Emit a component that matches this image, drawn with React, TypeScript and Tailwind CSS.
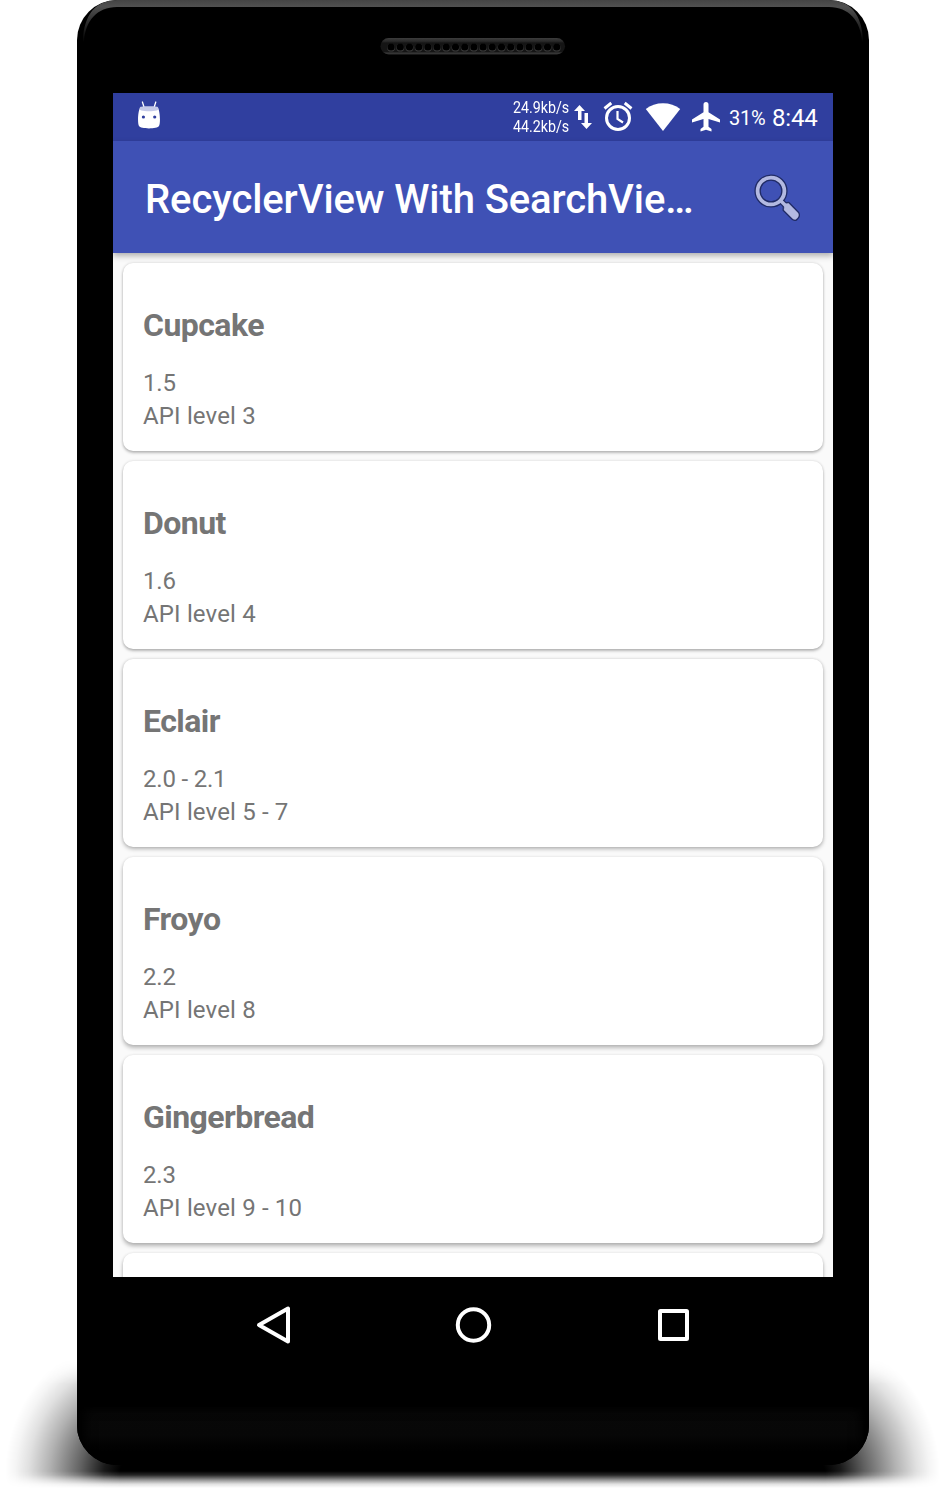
import React from "react";

type Release = { name: string; version: string; api: string; shadow: string };

const releases: Release[] = [
  { name: "Cupcake", version: "1.5", api: "API level 3", shadow: "shadow-[0_2px_3px_rgba(0,0,0,0.24),0_0_3px_rgba(0,0,0,0.16)]" },
  { name: "Donut", version: "1.6", api: "API level 4", shadow: "shadow-[0_2px_3px_rgba(0,0,0,0.25),0_0_3px_rgba(0,0,0,0.14)]" },
  { name: "Eclair", version: "2.0 - 2.1", api: "API level 5 - 7", shadow: "shadow-[0_2px_4px_rgba(0,0,0,0.27),0_0_3px_rgba(0,0,0,0.12)]" },
  { name: "Froyo", version: "2.2", api: "API level 8", shadow: "shadow-[0_3px_4px_rgba(0,0,0,0.26),0_0_3px_rgba(0,0,0,0.1)]" },
  { name: "Gingerbread", version: "2.3", api: "API level 9 - 10", shadow: "shadow-[0_3px_4px_rgba(0,0,0,0.28),0_0_3px_rgba(0,0,0,0.09)]" },
];

function GroundShadow() {
  return (
    <svg className="absolute bottom-0 left-0" width="945" height="150" viewBox="0 1340 945 150" aria-hidden="true">
      <defs>
        <radialGradient id="corner">
          <stop offset="0" stopColor="#000" />
          <stop offset="0.12" stopColor="#000" />
          <stop offset="0.24" stopColor="#000" stopOpacity="0.9" />
          <stop offset="0.42" stopColor="#000" stopOpacity="0.62" />
          <stop offset="0.66" stopColor="#000" stopOpacity="0.3" />
          <stop offset="0.82" stopColor="#000" stopOpacity="0.12" />
          <stop offset="0.92" stopColor="#000" stopOpacity="0.04" />
          <stop offset="1" stopColor="#000" stopOpacity="0" />
        </radialGradient>
        <linearGradient id="fade" x1="0" y1="1358" x2="0" y2="1488" gradientUnits="userSpaceOnUse">
          <stop offset="0" stopColor="#fff" stopOpacity="0" />
          <stop offset="0.2" stopColor="#fff" />
          <stop offset="0.87" stopColor="#fff" />
          <stop offset="0.9" stopColor="#fff" stopOpacity="0.85" />
          <stop offset="0.94" stopColor="#fff" stopOpacity="0.4" />
          <stop offset="0.97" stopColor="#fff" stopOpacity="0.12" />
          <stop offset="1" stopColor="#fff" stopOpacity="0" />
        </linearGradient>
        <mask id="fadeMask" maskUnits="userSpaceOnUse" x="0" y="1340" width="945" height="150">
          <rect y="1340" width="945" height="150" fill="url(#fade)" />
        </mask>
      </defs>
      <g mask="url(#fadeMask)">
        <ellipse cx="135" cy="1475" rx="130" ry="140" fill="url(#corner)" />
        <ellipse cx="810" cy="1475" rx="130" ry="140" fill="url(#corner)" />
        <rect x="135" y="1450" width="675" height="40" />
      </g>
    </svg>
  );
}

function Speaker() {
  return (
    <svg width="186" height="18" viewBox="0 0 186 18" aria-hidden="true">
      <defs>
        <linearGradient id="grille" x1="0" y1="0" x2="0" y2="1">
          <stop offset="0" stopColor="#3c3c3c" />
          <stop offset="0.2" stopColor="#292929" />
          <stop offset="0.3" stopColor="#151515" />
          <stop offset="0.85" stopColor="#151515" />
          <stop offset="0.9" stopColor="#383838" />
          <stop offset="1" stopColor="#303030" />
        </linearGradient>
      </defs>
      <rect x="0.5" y="1" width="184.500" height="16.500" rx="8.200" fill="url(#grille)" />
      {Array.from({ length: 19 }, (_, i) => (
        <g key={i}>
          <circle cx={11.1 + i * 9.2} cy="10.700" r="3.900" fill="#3c3c3c" />
          <circle cx={11.1 + i * 9.2} cy="10" r="3.600" fill="#000" />
        </g>
      ))}
    </svg>
  );
}

function StatusBar() {
  return (
    <div className="flex h-12 shrink-0 items-center bg-[#303f9f] text-white">
      <svg className="mb-1 ml-6 shrink-0" width="24" height="28" viewBox="0 0 24 28" aria-hidden="true">
        <path d="M5.400 1 7 6M18.800 1 17.200 6" stroke="#fff" strokeWidth="1.300" strokeLinecap="round" />
        <path d="M3 7C1 10 .3 22 2 25c1.400 3.200 18.600 3.200 20 0 1.700-3 1-15-1-18Z" fill="#fff" />
        <path d="M3.200 6C5 5 19 5 20.800 6c1 1 .5 3-1 3.500-4 1.100-11.600 1.100-15.600 0C2.700 9 2.200 7 3.200 6Z" fill="#c5cae9" />
        <circle cx="6.400" cy="16" r="1.600" fill="#303f9f" />
        <circle cx="17.700" cy="16" r="1.600" fill="#303f9f" />
      </svg>
      <div className="ml-[352px] w-[58px] text-base leading-[19px] whitespace-nowrap">
        <div className="w-max origin-left scale-x-[0.89]">24.9kb/s</div>
        <div className="w-max origin-left scale-x-[0.89]">44.2kb/s</div>
      </div>
      <svg className="ml-[3px] shrink-0" width="18" height="28" viewBox="0 0 18 28" fill="#fff" aria-hidden="true">
        <path d="M5.500 2 0 8h4v9h3.500V8H11ZM10.500 10H14v10h4l-5.500 6L7 20h3.500Z" />
      </svg>
      <svg className="ml-[11px] shrink-0" width="30" height="32" viewBox="0 0 30 32" fill="none" stroke="#fff" aria-hidden="true">
        <circle cx="15" cy="17" r="11.500" strokeWidth="3" />
        <path d="M1.500 7.500 8.300 2M28.500 7.500 21.700 2" strokeWidth="2.900" />
        <path d="M14.500 10v8l5.500 3.500" strokeWidth="2.200" />
      </svg>
      <svg className="ml-3 shrink-0" width="36" height="30" viewBox="0 0 36 30" aria-hidden="true">
        <path d="M.8 6.900C10-.6 26-.6 35.200 6.900L18 29Z" fill="#fff" />
      </svg>
      <svg className="ml-[11px] shrink-0" width="28" height="32" viewBox="0 0 28 32" aria-hidden="true">
        <path d="M28 21.500v-3L16.500 11.300V3.600a2.500 2.500 0 0 0-5 0v7.700L0 18.500v3l11.500-3.600v7.800L8.500 28v2.400l5.500-1.600 5.500 1.600V28l-3-2.300v-7.800Z" fill="#fff" />
      </svg>
      <div className="mt-0.5 ml-[9px] w-[43px] text-xl leading-6 tracking-[-0.2px]">31%</div>
      <div className="mt-0.5 text-2xl leading-7 tracking-[-0.2px]">8:44</div>
    </div>
  );
}

function SearchIcon() {
  return (
    <svg width="54" height="54" viewBox="0 0 54 54" fill="none" strokeLinejoin="round" aria-hidden="true">
      <g stroke="#202b66">
        <circle cx="21" cy="21" r="13.400" strokeWidth="6.400" />
        <path d="m31 31 5 5" strokeWidth="6" />
        <path d="M34.500 34 38.500 33.300 48 43Q50 46 46 49.300 44 50 42.500 48.500L34 40Z" strokeWidth="3" />
      </g>
      <g stroke="#b3b9e1">
        <circle cx="21" cy="21" r="13.400" strokeWidth="3.800" />
        <path d="m30.500 30.500 6 6" strokeWidth="3.400" />
        <path d="M34.500 34 38.500 33.300 48 43Q50 46 46 49.300 44 50 42.500 48.500L34 40Z" strokeWidth="0.300" fill="#b3b9e1" />
      </g>
    </svg>
  );
}

function AppBar() {
  return (
    <header className="relative z-10 flex h-28 shrink-0 items-center justify-between bg-[#3f51b5] pr-[29px] pl-8 text-white shadow-[0_3px_6px_rgba(0,0,0,0.3)]">
      <h1 className="mt-1.5 text-[40px] leading-[48px] font-medium tracking-[-0.1px] whitespace-nowrap">RecyclerView With SearchVie…</h1>
      <button aria-label="Search"><SearchIcon /></button>
    </header>
  );
}

function ReleaseCard({ release }: { release: Release }) {
  return (
    <article className={`h-[188px] shrink-0 rounded-[10px] bg-white px-5 pt-[43px] text-[#757575] ${release.shadow}`}>
      <h2 className="text-[32px] leading-[38px] font-bold tracking-[-0.55px]">{release.name}</h2>
      <p className="mt-[23px] text-2xl leading-[33px] tracking-[-0.2px]">{release.version}</p>
      <p className="text-2xl leading-[33px] tracking-[0.15px]">{release.api}</p>
    </article>
  );
}

export default function App() {
  return (
    <div className="relative h-[1490px] w-[945px] overflow-hidden bg-white pl-[77px] font-[Roboto,sans-serif]">
      <GroundShadow />
      <div className="relative flex h-[1465px] w-[792px] flex-col overflow-hidden rounded-[40px] bg-black">
        <svg className="absolute top-0 left-0" width="792" height="50" viewBox="0 0 792 50" aria-hidden="true">
          <defs>
            <linearGradient id="rim" x1="0" y1="0" x2="0" y2="42" gradientUnits="userSpaceOnUse">
              <stop offset="0" stopColor="#444" />
              <stop offset="0.16" stopColor="#505050" />
              <stop offset="0.5" stopColor="#303030" />
              <stop offset="1" stopColor="#000" />
            </linearGradient>
          </defs>
          <path d="M6 42C6 22 14 0 40 0h712c26 0 34 22 34 42h-1c-1-21-13-35-33-35H40C20 7 8 21 7 42Z" fill="url(#rim)" />
        </svg>
        <div className="flex h-[93px] shrink-0 justify-center pt-[37px]"><Speaker /></div>
        <main className="mx-9 flex h-[1184px] shrink-0 flex-col overflow-hidden bg-[#fafafa]">
          <StatusBar />
          <AppBar />
          <div className="flex min-h-0 grow flex-col gap-2.5 overflow-hidden p-2.5">
            {releases.map((release) => <ReleaseCard key={release.name} release={release} />)}
            <div className="h-[188px] shrink-0 rounded-[10px] bg-white shadow-[0_3px_4px_rgba(0,0,0,0.28),0_0_3px_rgba(0,0,0,0.09)]" />
          </div>
        </main>
        <nav className="flex h-[130px] shrink-0 justify-center gap-40 pt-7">
          <svg width="40" height="40" viewBox="0 0 40 40" fill="none" stroke="#fff" strokeWidth="4" strokeLinejoin="round" aria-hidden="true"><path d="M6 20 35 3.500v33Z" /></svg>
          <svg width="40" height="40" viewBox="0 0 40 40" fill="none" stroke="#fff" strokeWidth="4" aria-hidden="true"><circle cx="20.500" cy="20" r="15.700" /></svg>
          <svg width="40" height="40" viewBox="0 0 40 40" fill="none" stroke="#fff" strokeWidth="4" strokeLinejoin="round" aria-hidden="true"><rect x="7" y="6" width="27" height="28" rx="0.500" /></svg>
        </nav>
        <div className="grow bg-linear-to-b from-[#080808] via-[#070707] to-black shadow-[inset_8px_0_12px_#000,inset_-8px_0_12px_#000]" />
      </div>
    </div>
  );
}
